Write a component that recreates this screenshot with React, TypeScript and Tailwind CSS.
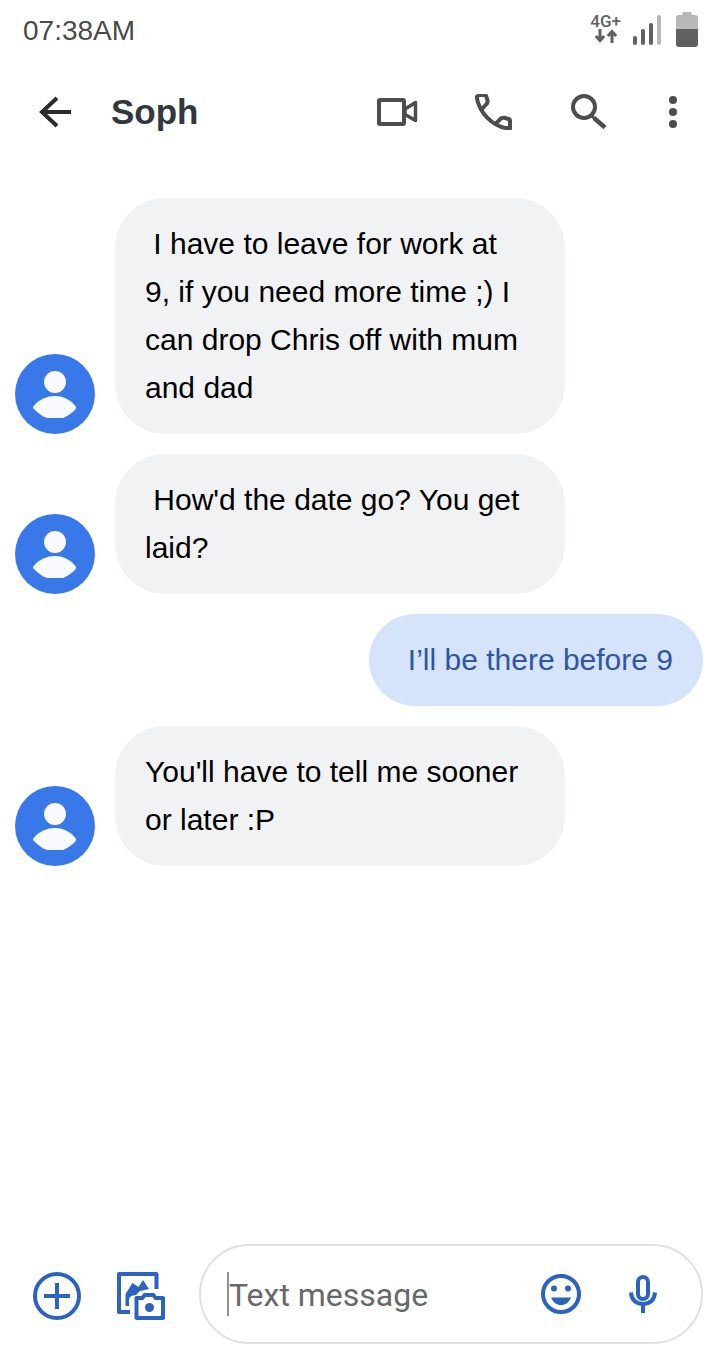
import React from 'react';

type Message = {
  text: string;
  sent?: boolean;
};

// each message opens with a space
const messages: Message[] = [
  { text: '\u00a0I have to leave for work at 9, if you need more time ;) I can drop Chris off with mum and dad' },
  { text: "\u00a0How'd the date go? You get laid?" },
  { text: '\u00a0I’ll be there before 9', sent: true },
  { text: "You'll have to tell me sooner or later :P" },
];

function StatusBar() {
  return (
    <div className="flex h-[60px] items-center justify-between pl-[23px] pr-[19px] text-[#4a4a4a]">
      <time className="pt-[2px] text-[28px] leading-8">07:38AM</time>
      <div className="flex items-center gap-3">
        <div className="flex flex-col items-center pb-1 font-[Roboto,sans-serif] text-[17px] font-medium leading-4 text-[#606060]">
          <span>4G+</span>
          <svg width="22" height="14" viewBox="0 0 22 14" fill="none" stroke="#606060" strokeWidth="3">
            <path d="M5 0v12M0.8 7 5 11.500 9.200 7M17 14V2M12.800 7 17 2.500 21.200 7" />
          </svg>
        </div>
        <div className="flex items-center gap-[14px]">
          <svg width="28" height="30" viewBox="0 0 28 30">
            <rect x="0" y="21" width="4" height="9" rx="2" fill="#606060" />
            <rect x="8" y="14" width="4" height="16" rx="2" fill="#606060" />
            <rect x="16" y="8" width="4" height="22" rx="2" fill="#606060" />
            <rect x="24" y="0" width="4" height="30" rx="2" fill="#b8b8b8" />
          </svg>
          <svg width="24" height="36" viewBox="0 0 24 36">
            <path d="M8 0h8l1 3h3a3 3 0 0 1 3 3v12H1V6a3 3 0 0 1 3-3h3z" fill="#b8b8b8" />
            <path d="M1 17h22v15a3 3 0 0 1-3 3H4a3 3 0 0 1-3-3z" fill="#606060" />
          </svg>
        </div>
      </div>
    </div>
  );
}

function Header() {
  return (
    <header className="flex h-[104px] items-center pl-[39px] pr-10 text-[#4d4d4f]">
      <button aria-label="Back" className="text-[#2b2b2b]">
        <svg width="32" height="32" viewBox="0 0 32 32" fill="none" stroke="currentColor" strokeWidth="4">
          <path d="M32 16H3M18 2 3 16l15 14" />
        </svg>
      </button>
      <h1 className="ml-10 flex-1 text-[35px] font-bold leading-10 text-[#32383d]">Soph</h1>
      <div className="flex items-center">
        <button aria-label="Video call">
          <svg width="41" height="28" viewBox="0 0 41 28" fill="none" stroke="currentColor" strokeWidth="4" strokeLinejoin="round">
            <rect x="2" y="2" width="25" height="24" rx="1" />
            <path d="M28 11 38.500 4.500v18L28 16.500z" strokeWidth="3.500" />
          </svg>
        </button>
        <button aria-label="Call" className="ml-[57px]">
          <svg width="37" height="36" viewBox="0 0 37 36" fill="none" stroke="currentColor" strokeWidth="4" strokeLinejoin="round">
            <path d="M1.500 1C3 18 18 34 35 34.500V27q0-1.500-1.500-2l-4.500-1.200q-2-.4-3.500 1L20.500 30M6.500 15.500 11.500 10q1.500-1.500 1-3.500L11.500 3q-.5-2-2-2h-8" />
          </svg>
        </button>
        <button aria-label="Search" className="ml-[59px]">
          <svg width="36" height="36" viewBox="0 0 36 36" fill="none" stroke="currentColor" strokeWidth="4">
            <circle cx="13" cy="13" r="11" />
            <path d="m21 22 3 3" strokeWidth="3" />
            <path d="m23 24 11 9.500" strokeWidth="4.500" />
          </svg>
        </button>
        <button aria-label="More options" className="ml-[61px]">
          <svg width="10" height="32" viewBox="0 0 10 32" fill="currentColor">
            <circle cx="5" cy="4" r="4" />
            <circle cx="5" cy="16" r="4" />
            <circle cx="5" cy="28" r="4" />
          </svg>
        </button>
      </div>
    </header>
  );
}

function Avatar() {
  return (
    <svg className="h-20 w-20 shrink-0" viewBox="0 0 80 80">
      <circle cx="40" cy="40" r="40" fill="#3878e8" />
      <circle cx="40" cy="28" r="11" fill="#f8fafd" />
      <path d="M18 53C23 46 31 42 40 42s16 4 21 11v2c-4 4-8 7-13 9H32c-6-2-10-6-14-10z" fill="#f8fafd" />
    </svg>
  );
}

function MessageRow({ text, sent }: Message) {
  if (sent) {
    return (
      <li className="flex justify-end">
        <p className="max-w-[450px] rounded-[50px] bg-[#d5e3fb] px-[30px] py-[22px] text-[#2f55a4]">{text}</p>
      </li>
    );
  }

  return (
    <li className="flex items-end gap-5">
      <Avatar />
      <p className="w-[450px] rounded-[50px] bg-[#f1f2f4] py-[22px] pl-[30px] pr-10 text-black">{text}</p>
    </li>
  );
}

function Composer() {
  return (
    <form className="flex items-center px-[15px] pb-5 text-[#2b63c0]">
      <div className="ml-[18px] flex gap-9 pt-1">
        <button type="button" aria-label="Add attachment">
          <svg width="48" height="48" viewBox="0 0 48 48" fill="none" stroke="currentColor" strokeWidth="4">
            <circle cx="24" cy="24" r="22" />
            <path d="M24 11v26M11 24h26" />
          </svg>
        </button>
        <button type="button" aria-label="Send a photo">
          <svg width="48" height="48" viewBox="0 0 48 48" fill="none" stroke="currentColor" strokeWidth="4" strokeLinejoin="round">
            <path d="M39.500 17V2H2v38h11" />
            <path d="M8.500 34V22l7-11 6 4 4.500-7 6 9-9 2-4 4-5 1-2 3v7z" fill="currentColor" stroke="none" />
            <path d="M19.500 26h6l2-3h9l2 3h7.500v20H19.500z" />
            <circle cx="32.500" cy="35.500" r="4.500" fill="currentColor" stroke="none" />
          </svg>
        </button>
      </div>
      <div className="ml-[34px] flex h-[100px] min-w-0 flex-1 items-center rounded-full border-2 border-[#e0e0e0] pl-[26px] pr-11">
        <span className="h-11 w-[2px] bg-[#909090]" />
        <input
          type="text"
          aria-label="Text message"
          placeholder="Text message"
          className="min-w-0 flex-1 bg-transparent pt-[2px] font-[Roboto,sans-serif] text-[32px] leading-10 text-[#5f6164] outline-none placeholder:text-[#66686b]"
        />
        <button type="button" aria-label="Emoji">
          <svg width="40" height="40" viewBox="0 0 40 40" fill="currentColor">
            <circle cx="20" cy="20" r="18" fill="none" stroke="currentColor" strokeWidth="4" />
            <circle cx="13" cy="14.500" r="3" />
            <circle cx="27" cy="14.500" r="3" />
            <path d="M10 23.500h20c-2 5-5.500 7.500-10 7.500s-8-2.500-10-7.500z" />
          </svg>
        </button>
        <button type="button" aria-label="Voice message" className="ml-12">
          <svg width="28" height="38" viewBox="0 0 28 38" fill="none" stroke="currentColor" strokeWidth="4">
            <rect x="9" y="2" width="10" height="22" rx="5" />
            <path d="M2 17.500C2.500 25 7 29 14 29s11.500-4 12-11.500M14 29v9" />
          </svg>
        </button>
      </div>
    </form>
  );
}

export default function App() {
  return (
    <div className="flex min-h-screen flex-col bg-white font-['Liberation_Sans',Arial,sans-serif]">
      <StatusBar />
      <Header />
      <main className="flex-1 px-[15px] pb-5 pt-[34px]">
        <ul className="flex flex-col gap-5 text-[30px] leading-[48px]">
          {messages.map((message) => (
            <MessageRow key={message.text} {...message} />
          ))}
        </ul>
      </main>
      <Composer />
    </div>
  );
}
